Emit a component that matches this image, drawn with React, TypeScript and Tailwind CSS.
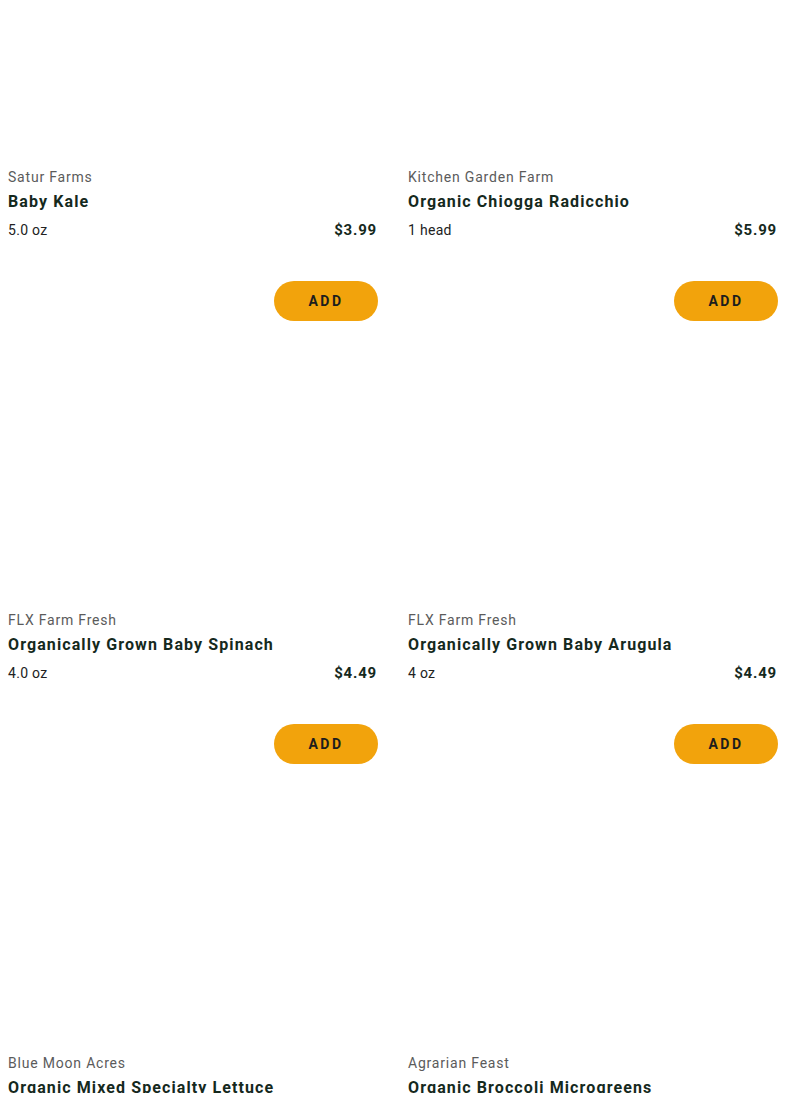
const products = [
  { farm: "Satur Farms", name: "Baby Kale", size: "5.0 oz", price: "$3.99" },
  { farm: "Kitchen Garden Farm", name: "Organic Chiogga Radicchio", size: "1 head", price: "$5.99" },
  { farm: "FLX Farm Fresh", name: "Organically Grown Baby Spinach", size: "4.0 oz", price: "$4.49" },
  { farm: "FLX Farm Fresh", name: "Organically Grown Baby Arugula", size: "4 oz", price: "$4.49" },
  { farm: "Blue Moon Acres", name: "Organic Mixed Specialty Lettuce", size: "5 oz", price: "$4.99" },
  { farm: "Agrarian Feast", name: "Organic Broccoli Microgreens", size: "2 oz", price: "$5.49" },
];

const ProductCard = ({ farm, name, size, price }: (typeof products)[number]) => {
  return (
    <div className="flex flex-col">
      <div className="h-[289px] bg-white" />
      <div className="text-[14px] leading-[20px] tracking-[0.8px] text-[#5b5b5b]">{farm}</div>
      <div className="mt-[3px] text-[16px] leading-[24px] font-bold tracking-[1.1px] text-[#15291d]">{name}</div>
      <div className="mt-[6px] flex items-center justify-between text-[14px] leading-[20px]">
        <span className="tracking-[0.3px] text-[#222]">{size}</span>
        <span className="font-bold text-[15px] tracking-[0.8px] text-[#15291d]">{price}</span>
      </div>
      <div className="mt-[41px] flex justify-end">
        <button className="mr-[-1px] h-[40px] w-[104px] rounded-full bg-[#f2a30c] text-[14px] font-bold tracking-[2.5px] text-[#1d1d1d]">
          ADD
        </button>
      </div>
    </div>
  );
};

export default function App() {
  return (
    <div className="h-[1093px] overflow-hidden bg-white font-['Roboto',sans-serif]">
      <div className="-mt-[122px] grid grid-cols-2 gap-x-[31px] px-2">
        {products.map((p, i) => (
          <ProductCard key={i} {...p} />
        ))}
      </div>
    </div>
  );
}
